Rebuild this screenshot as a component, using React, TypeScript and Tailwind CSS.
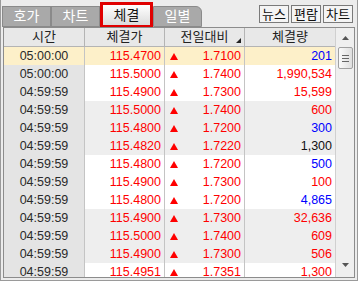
import React from "react";

type Row = { time: string; price: string; diff: string; vol: string; volColor: string };

const rows: Row[] = [
  { time: "05:00:00", price: "115.4700", diff: "1.7100", vol: "201", volColor: "text-[#0000ff]" },
  { time: "05:00:00", price: "115.5000", diff: "1.7400", vol: "1,990,534", volColor: "text-[#ff0000]" },
  { time: "04:59:59", price: "115.4900", diff: "1.7300", vol: "15,599", volColor: "text-[#ff0000]" },
  { time: "04:59:59", price: "115.5000", diff: "1.7400", vol: "600", volColor: "text-[#ff0000]" },
  { time: "04:59:59", price: "115.4800", diff: "1.7200", vol: "300", volColor: "text-[#0000ff]" },
  { time: "04:59:59", price: "115.4820", diff: "1.7220", vol: "1,300", volColor: "text-[#111]" },
  { time: "04:59:59", price: "115.4800", diff: "1.7200", vol: "500", volColor: "text-[#0000ff]" },
  { time: "04:59:59", price: "115.4900", diff: "1.7300", vol: "100", volColor: "text-[#ff0000]" },
  { time: "04:59:59", price: "115.4800", diff: "1.7200", vol: "4,865", volColor: "text-[#0000ff]" },
  { time: "04:59:59", price: "115.4900", diff: "1.7300", vol: "32,636", volColor: "text-[#ff0000]" },
  { time: "04:59:59", price: "115.5000", diff: "1.7400", vol: "609", volColor: "text-[#ff0000]" },
  { time: "04:59:59", price: "115.4900", diff: "1.7300", vol: "506", volColor: "text-[#ff0000]" },
  { time: "04:59:59", price: "115.4951", diff: "1.7351", vol: "1,300", volColor: "text-[#ff0000]" },
];

function UpArrow() {
  return (
    <svg width="8" height="7" viewBox="0 0 8 7" className="shrink-0">
      <polygon points="4,0 8,7 0,7" fill="#ff0000" />
    </svg>
  );
}

function Tab({ label, active }: { label: string; active?: boolean }) {
  if (active) {
    return (
      <div className="w-[53px] h-[26px] border-[3px] border-[#e00000] bg-gradient-to-b from-[#ffffff] to-[#dcdcdc] flex items-center justify-center text-[14px] text-[#111]">
        {label}
      </div>
    );
  }
  return (
    <div className="w-[49px] h-[21px] border border-[#8a8a8a] bg-[#a9a9a9] flex items-center justify-center text-[14px] text-white">
      {label}
    </div>
  );
}

function SmallButton({ label }: { label: string }) {
  return (
    <div className="w-[30px] h-[18px] border border-[#7a7a7a] bg-[#f4f4f4] flex items-center justify-center text-[13px] text-[#111] leading-none">
      {label}
    </div>
  );
}

export default function App() {
  return (
    <div className="w-[358px] h-[281px] bg-[#ececec] overflow-hidden font-['Liberation_Sans','Noto_Sans_CJK_KR',sans-serif] border-l border-r border-b border-[#9a9a9a] flex flex-col">
      {/* Tabs */}
      <div className="h-[27px] flex items-end justify-between pl-[1px] pr-[4px]">
        <div className="flex items-end">
          <Tab label="호가" />
          <Tab label="차트" />
          <div className="mb-[-1px]">
            <Tab label="체결" active />
          </div>
          <div className="w-[49px] h-[21px] border border-[#8a8a8a] rounded-tr-[6px] bg-[#a9a9a9] flex items-center justify-center text-[14px] text-white">
            일별
          </div>
        </div>
        <div className="flex gap-[2px] mb-[4px]">
          <SmallButton label="뉴스" />
          <SmallButton label="편람" />
          <SmallButton label="차트" />
        </div>
      </div>

      {/* Table */}
      <div className="flex-1 mx-[2px] mb-[2px] border border-[#8c8c8c] bg-white flex overflow-hidden">
        <div className="flex-1 flex flex-col overflow-hidden">
          <div className="h-[19px] shrink-0 flex bg-[#e8e8e8] border-b border-[#b4b4b4] text-[13px] text-[#222]">
            <div className="w-[81px] border-r border-[#b4b4b4] flex items-center justify-center">시간</div>
            <div className="w-[80px] border-r border-[#b4b4b4] flex items-center justify-center">체결가</div>
            <div className="w-[80px] border-r border-[#b4b4b4] flex items-center justify-center relative">
              전일대비
              <svg width="5" height="5" viewBox="0 0 5 5" className="absolute right-[3px] bottom-[3px]">
                <polygon points="5,0 5,5 0,5" fill="#222" />
              </svg>
            </div>
            <div className="flex-1 flex items-center justify-center">체결량</div>
          </div>
          {rows.map((r, i) => {
            const group = Math.floor(i / 3) % 2;
            const bg = i === 0 ? "bg-[#fdf0c9]" : group === 1 ? "bg-[#eeeeee]" : "bg-white";
            return (
              <div key={i} className={`h-[18px] shrink-0 flex text-[12.5px] ${bg}`}>
                <div className={`w-[81px] border-r border-[#c4c4c4] flex items-center justify-center text-[#2a2a2a] ${i === 0 ? "bg-[#fdf0c9]" : "bg-[#e4e4e4]"}`}>
                  {r.time}
                </div>
                <div className="w-[80px] border-r border-[#c4c4c4] flex items-center justify-end pr-[3px] text-[#ff0000]">
                  {r.price}
                </div>
                <div className="w-[80px] border-r border-[#c4c4c4] flex items-center justify-between pl-[5px] pr-[3px] text-[#ff0000]">
                  <UpArrow />
                  <span>{r.diff}</span>
                </div>
                <div className={`flex-1 flex items-center justify-end pr-[3px] ${r.volColor}`}>{r.vol}</div>
              </div>
            );
          })}
        </div>

        {/* Scrollbar */}
        <div className="w-[19px] shrink-0 bg-[#efefef] border-l border-[#d0d0d0] flex flex-col items-center">
          <div className="h-[17px] w-full flex items-center justify-center pt-[2px]">
            <svg width="7" height="4" viewBox="0 0 7 4">
              <polygon points="3.5,0 7,4 0,4" fill="#555" />
            </svg>
          </div>
          <div className="mt-[2px] w-[15px] h-[22px] border border-[#a0a0a0] rounded-[2px] bg-gradient-to-r from-[#fafafa] to-[#dedede] flex flex-col items-center justify-center gap-[2px]">
            <div className="w-[7px] h-px bg-[#666]" />
            <div className="w-[7px] h-px bg-[#666]" />
            <div className="w-[7px] h-px bg-[#666]" />
          </div>
          <div className="flex-1" />
          <div className="h-[14px] w-full flex items-start justify-center">
            <svg width="7" height="4" viewBox="0 0 7 4">
              <polygon points="0,0 7,0 3.5,4" fill="#555" />
            </svg>
          </div>
        </div>
      </div>
    </div>
  );
}
